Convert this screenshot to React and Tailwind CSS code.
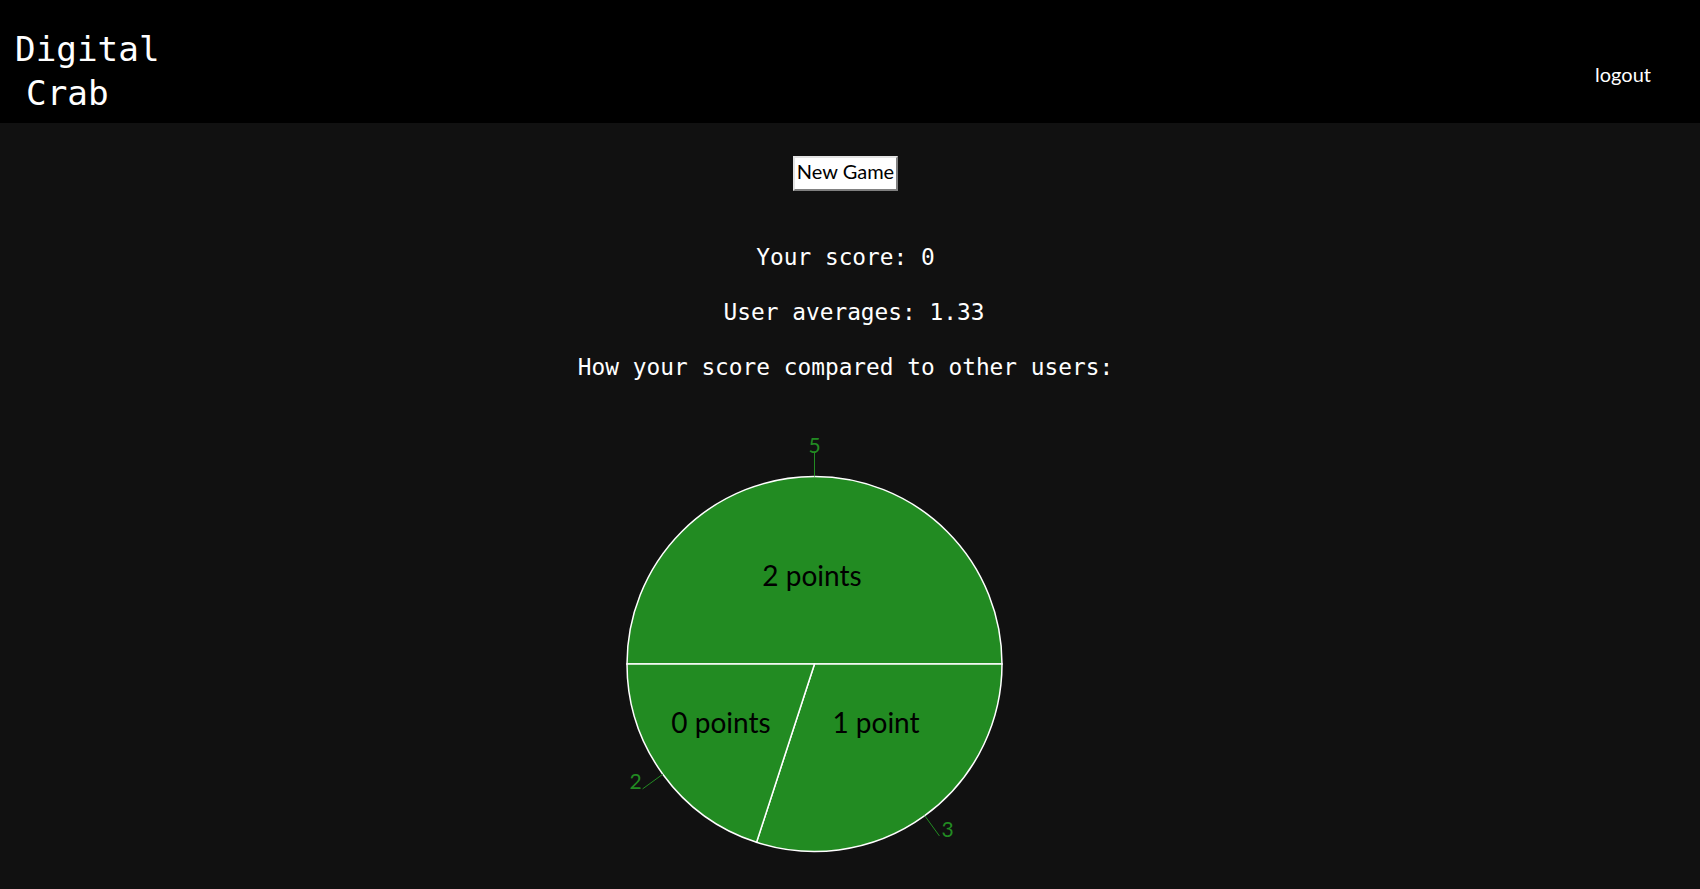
import React from "react";

const mono = { fontFamily: '"DejaVu Sans Mono", "Liberation Mono", monospace' };

// pie geometry in svg coords
const CX = 227.5;
const CY = 250;
const R = 187.5;

const pt = (deg, r = R) => {
  const a = (deg * Math.PI) / 180;
  return [CX + r * Math.cos(a), CY + r * Math.sin(a)];
};

const slice = (from, to) => {
  const [x1, y1] = pt(from);
  const [x2, y2] = pt(to);
  const large = to - from > 180 ? 1 : 0;
  return `M ${CX} ${CY} L ${x1} ${y1} A ${R} ${R} 0 ${large} 1 ${x2} ${y2} Z`;
};

const slices = [
  { name: "2 points", value: 5, from: 180, to: 360, tx: 225, ty: 172, mid: 270, anchor: "middle" },
  { name: "1 point", value: 3, from: 0, to: 108, tx: 289, ty: 319, mid: 54, anchor: "start" },
  { name: "0 points", value: 2, from: 108, to: 180, tx: 134, ty: 319, mid: 144, anchor: "end" },
];

function ScorePie() {
  return (
    <svg width="460" height="475" viewBox="0 0 460 475" style={{ fontFamily: "Lato, 'Open Sans', sans-serif" }}>
      {slices.map((s) => (
        <path key={s.name} d={slice(s.from, s.to)} fill="#228b22" stroke="#ffffff" strokeWidth="1.5" />
      ))}
      {slices.map((s) => {
        const [x1, y1] = pt(s.mid);
        const [x2, y2] = pt(s.mid, R + 25);
        let lx = x2;
        let ly = y2;
        if (s.anchor === "middle") ly = y2 + 1;
        if (s.anchor === "end") { lx = x2 - 1; ly = y2; }
        if (s.anchor === "start") { lx = x2 + 2; ly = y2 + 1; }
        return (
          <g key={"l" + s.name}>
            <line x1={x1} y1={y1} x2={x2} y2={y2} stroke="#228b22" strokeWidth="1" />
            <text x={lx} y={ly} textAnchor={s.anchor} fill="#228b22" fontSize="21">
              {s.value}
            </text>
          </g>
        );
      })}
      {slices.map((s) => (
        <text key={"t" + s.name} x={s.tx} y={s.ty} textAnchor="middle" fill="#000000" fontSize="28">
          {s.name}
        </text>
      ))}
    </svg>
  );
}

export default function App() {
  return (
    <div className="min-h-[889px] bg-[#111111] text-white">
      <header className="h-[123px] bg-black flex justify-between items-start">
        <h1 className="mt-[27px] pl-[15px] text-[34.3px] leading-[44px] font-normal" style={mono}>
          <span className="block">Digital</span>
          <span className="block pl-[11px]">Crab</span>
        </h1>
        <a
          href="#"
          className="mt-[62px] mr-[49px] text-[20px] leading-[24px] text-white"
          style={{ fontFamily: "Lato, sans-serif" }}
        >
          logout
        </a>
      </header>

      <main className="flex flex-col items-center">
        <div className="w-full flex justify-center pt-[33px] pr-[9px]">
          <button
            className="w-[105px] h-[35px] bg-white text-black text-[20px] leading-none border-2 border-t-[#e3e3e3] border-l-[#e3e3e3] border-b-[#808080] border-r-[#808080] px-0 pb-[6px]"
            style={{ fontFamily: "Lato, sans-serif" }}
          >
            New Game
          </button>
        </div>

        <div className="w-full flex flex-col items-center pr-[9px] text-[22.8px] leading-[24px]" style={mono}>
          <p className="mt-[54px]">Your score: 0</p>
          <p className="mt-[31px] ml-[17px]">User averages: 1.33</p>
          <p className="mt-[31px]">How your score compared to other users:</p>
        </div>
        <div className="w-full flex justify-center pr-[66px] mt-[35px]">
          <ScorePie />
        </div>
      </main>
    </div>
  );
}
